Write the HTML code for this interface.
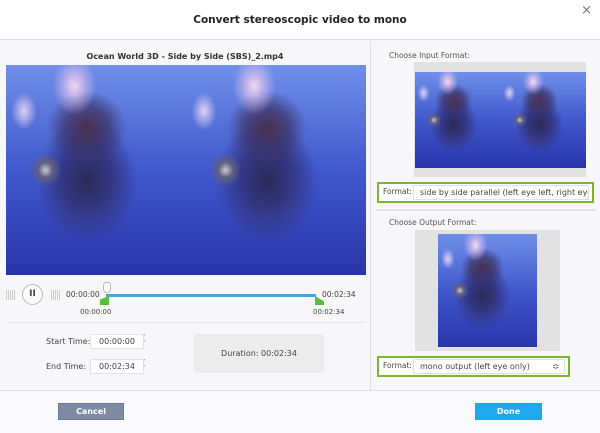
<!DOCTYPE html>
<html><head><meta charset="utf-8"><style>
*{box-sizing:border-box;margin:0;padding:0}
body{width:600px;height:433px;background:#f7f7f9;font-family:"DejaVu Sans","Liberation Sans",sans-serif;font-size:8px;color:#444;position:relative;overflow:hidden}
.a{position:absolute}
.title{left:0;top:0;width:600px;height:40px;background:#fff;border-bottom:1px solid #ddd;text-align:center;line-height:40px;font-weight:bold;font-size:10.5px;color:#222}
.vid{background:
 radial-gradient(ellipse 12% 14% at 38% 10%,#f4d6f0 0%,rgba(240,200,240,.5) 50%,rgba(0,0,0,0) 100%),
 radial-gradient(ellipse 7% 9% at 10% 22%,#e0d0f4 0%,rgba(0,0,0,0) 100%),
 radial-gradient(ellipse 9% 8% at 22% 50%,#c8c8d8 0%,#606080 45%,rgba(0,0,0,0) 100%),
 radial-gradient(ellipse 22% 18% at 45% 30%,#4a3050 0%,rgba(60,50,100,.7) 55%,rgba(0,0,0,0) 100%),
 radial-gradient(ellipse 28% 30% at 45% 55%,#2c2a58 0%,#34398a 55%,rgba(0,0,0,0) 100%),
 linear-gradient(180deg,#7090ea 0%,#4058cc 50%,#2a34aa 100%)}
.green{border:2px solid #7cb82f;background:#fff}
.sel{background:#fff;border:1px solid #e2e2e2;color:#444;font-size:8px;padding-left:6px;line-height:13px}
.inp{background:#fff;border:1px solid #e3e3e3;text-align:center;line-height:13px;font-size:8px}
</style></head><body>
<div class="a title">Convert stereoscopic video to mono</div>
<div class="a" style="right:8px;top:3px;font-size:13px;color:#777">×</div>
<div class="a" style="left:370px;top:41px;width:1px;height:349px;background:#ddd"></div>
<div class="a" style="left:0;top:52px;width:370px;text-align:center;font-weight:bold;font-size:8px;color:#333">Ocean World 3D - Side by Side (SBS)_2.mp4</div>
<div class="a vid" style="left:6px;top:65px;width:180px;height:210px"></div>
<div class="a vid" style="left:186px;top:65px;width:180px;height:210px"></div>
<div class="a" style="left:6px;top:290px;width:10px;height:10px;background:repeating-linear-gradient(90deg,#ccc 0 1px,transparent 1px 2px)"></div>
<div class="a" style="left:22px;top:284px;width:21px;height:21px;border:1px solid #bbb;border-radius:50%;background:#fafafa;text-align:center;line-height:19px;font-weight:bold;font-size:9px;color:#444">II</div>
<div class="a" style="left:51px;top:290px;width:10px;height:10px;background:repeating-linear-gradient(90deg,#ccc 0 1px,transparent 1px 2px)"></div>
<div class="a" style="left:66px;top:290px;font-size:7.5px">00:00:00</div>
<div class="a" style="left:106px;top:294px;width:210px;height:3px;background:#3aa6ec"></div>
<div class="a" style="left:103px;top:282px;width:8px;height:11px;background:#fff;border:1px solid #bbb;border-radius:3px 3px 4px 4px"></div>
<div class="a" style="left:100px;top:296px;width:9px;height:9px;background:#5cbd3c;clip-path:polygon(100% 0,100% 100%,0 100%,0 40%)"></div>
<div class="a" style="left:315px;top:296px;width:9px;height:9px;background:#5cbd3c;clip-path:polygon(0 0,100% 60%,100% 100%,0 100%)"></div>
<div class="a" style="left:80px;top:308px;font-size:7px">00:00:00</div>
<div class="a" style="left:313px;top:308px;font-size:7px">00:02:34</div>
<div class="a" style="left:322px;top:290px;font-size:7.5px">00:02:34</div>
<div class="a" style="left:8px;top:322px;width:358px;height:1px;background:#e4e4e4"></div>
<div class="a" style="left:46px;top:337px;font-size:8px">Start Time:</div>
<div class="a inp" style="left:90px;top:334px;width:54px;height:15px">00:00:00</div>
<div class="a" style="left:143px;top:335px;font-size:6px;color:#888;line-height:6px">˄<br>˅</div>
<div class="a" style="left:46px;top:362px;font-size:8px">End Time:</div>
<div class="a inp" style="left:90px;top:359px;width:54px;height:15px">00:02:34</div>
<div class="a" style="left:143px;top:360px;font-size:6px;color:#888;line-height:6px">˄<br>˅</div>
<div class="a" style="left:194px;top:334px;width:130px;height:39px;background:#ececec;border-radius:3px;text-align:center;line-height:39px;font-size:8px">Duration: 00:02:34</div>
<div class="a" style="left:0;top:390px;width:600px;height:43px;background:#f9f9fb;border-top:1px solid #e0e0e0"></div>
<div class="a" style="left:58px;top:403px;width:66px;height:17px;background:#7f8aa5;border:1px solid #6d7894;color:#fff;font-weight:bold;text-align:center;line-height:15px;font-size:8px">Cancel</div>
<div class="a" style="left:475px;top:403px;width:67px;height:17px;background:#1fa8ee;color:#fff;font-weight:bold;text-align:center;line-height:17px;font-size:8px">Done</div>
<div class="a" style="left:389px;top:51px;font-size:7.5px;color:#555">Choose Input Format:</div>
<div class="a" style="left:414px;top:62px;width:172px;height:115px;background:#e2e2e2"></div>
<div class="a vid" style="left:415px;top:72px;width:86px;height:96px"></div>
<div class="a vid" style="left:501px;top:72px;width:85px;height:96px"></div>
<div class="a green" style="left:377px;top:182px;width:217px;height:21px"></div>
<div class="a" style="left:383px;top:187px;font-size:7.5px">Format:</div>
<div class="a sel" style="left:413px;top:185px;width:176px;height:15px;overflow:hidden;white-space:nowrap">side by side parallel (left eye left, right eye ri ≎</div>
<div class="a" style="left:376px;top:209px;width:220px;height:2px;background:#e2e2e2"></div>
<div class="a" style="left:389px;top:218px;font-size:7.5px;color:#555">Choose Output Format:</div>
<div class="a" style="left:415px;top:230px;width:145px;height:121px;background:#e2e2e2"></div>
<div class="a vid" style="left:438px;top:234px;width:99px;height:113px"></div>
<div class="a green" style="left:377px;top:356px;width:193px;height:21px"></div>
<div class="a" style="left:383px;top:361px;font-size:7.5px">Format:</div>
<div class="a sel" style="left:413px;top:359px;width:152px;height:15px">mono output (left eye only)<span style="position:absolute;right:5px">≎</span></div>
</body></html>
